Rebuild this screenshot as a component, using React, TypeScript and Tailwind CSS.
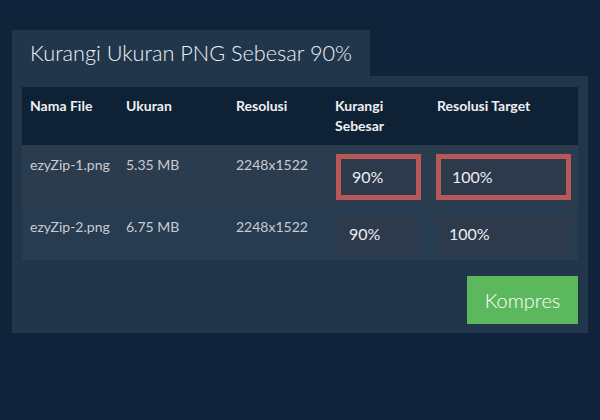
import React from "react";

const rows = [
  { name: "ezyZip-1.png", size: "5.35 MB", res: "2248x1522", hl: true },
  { name: "ezyZip-2.png", size: "6.75 MB", res: "2248x1522", hl: false },
];

export default function App() {
  return (
    <div
      className="w-[600px] h-[420px] bg-[#10233a] pt-[30px] pl-[12px]"
      style={{ fontFamily: "Lato, 'Open Sans', sans-serif" }}
    >
      <div className="w-[358px] h-[46px] bg-[#22364b] flex items-center pl-[18px] pt-[1px]">
        <span className="text-[21.7px] font-light text-[#eef1f4]">
          Kurangi Ukuran PNG Sebesar 90%
        </span>
      </div>
      <div className="w-[576px] bg-[#22364b] px-[10px] pt-[11px] pb-[9px]">
        <div className="grid grid-cols-[96px_110px_100px_101px_149px] bg-[#0f2134] h-[58px] text-[14px] font-bold text-[#eef0f2] leading-[20px] pt-[9px]">
          <div className="pl-[8px]">Nama File</div>
          <div className="pl-[8px]">Ukuran</div>
          <div className="pl-[8px]">Resolusi</div>
          <div className="pl-[7px]">
            Kurangi
            <br />
            Sebesar
          </div>
          <div className="pl-[8px]">Resolusi Target</div>
        </div>
        {rows.map((r) => (
          <div
            key={r.name}
            className={
              r.hl
                ? "grid grid-cols-[96px_110px_100px_101px_149px] bg-[#2c3c4f] h-[62px] text-[14px] text-[#c7ccd2] leading-[20px]"
                : "grid grid-cols-[96px_110px_100px_101px_149px] bg-[#273b51] h-[53px] text-[14px] text-[#c7ccd2] leading-[20px]"
            }
          >
            <div className={r.hl ? "pl-[8px] pt-[10px]" : "pl-[8px] pt-[10px]"}>{r.name}</div>
            <div className={r.hl ? "pl-[8px] pt-[10px]" : "pl-[8px] pt-[10px]"}>{r.size}</div>
            <div className={r.hl ? "pl-[8px] pt-[10px]" : "pl-[8px] pt-[10px]"}>{r.res}</div>
            <div className={r.hl ? "pl-[8px] pt-[9px]" : "pl-[9px] pt-[7px]"}>
              {r.hl ? (
                <div className="w-[85px] h-[46px] border-[5px] border-[#b65858] bg-[#2c3a4b] flex items-center pl-[11px] text-[16px] text-[#eceef1]">
                  90%
                </div>
              ) : (
                <div className="w-[83px] h-[40px] bg-[#2c3a4b] flex items-center pl-[12px] text-[16px] text-[#eceef1]">
                  90%
                </div>
              )}
            </div>
            <div className={r.hl ? "pl-[7px] pt-[9px]" : "pl-[8px] pt-[7px]"}>
              {r.hl ? (
                <div className="w-[135px] h-[46px] border-[5px] border-[#b65858] bg-[#2c3a4b] flex items-center pl-[11px] text-[16px] text-[#eceef1]">
                  100%
                </div>
              ) : (
                <div className="w-[135px] h-[40px] bg-[#2c3a4b] flex items-center pl-[12px] text-[16px] text-[#eceef1]">
                  100%
                </div>
              )}
            </div>
          </div>
        ))}
        <div className="flex justify-end mt-[16px]">
          <button className="w-[111px] h-[48px] bg-[#5cb85c] text-white text-[20px] font-light flex items-center justify-center">
            Kompres
          </button>
        </div>
      </div>
    </div>
  );
}
